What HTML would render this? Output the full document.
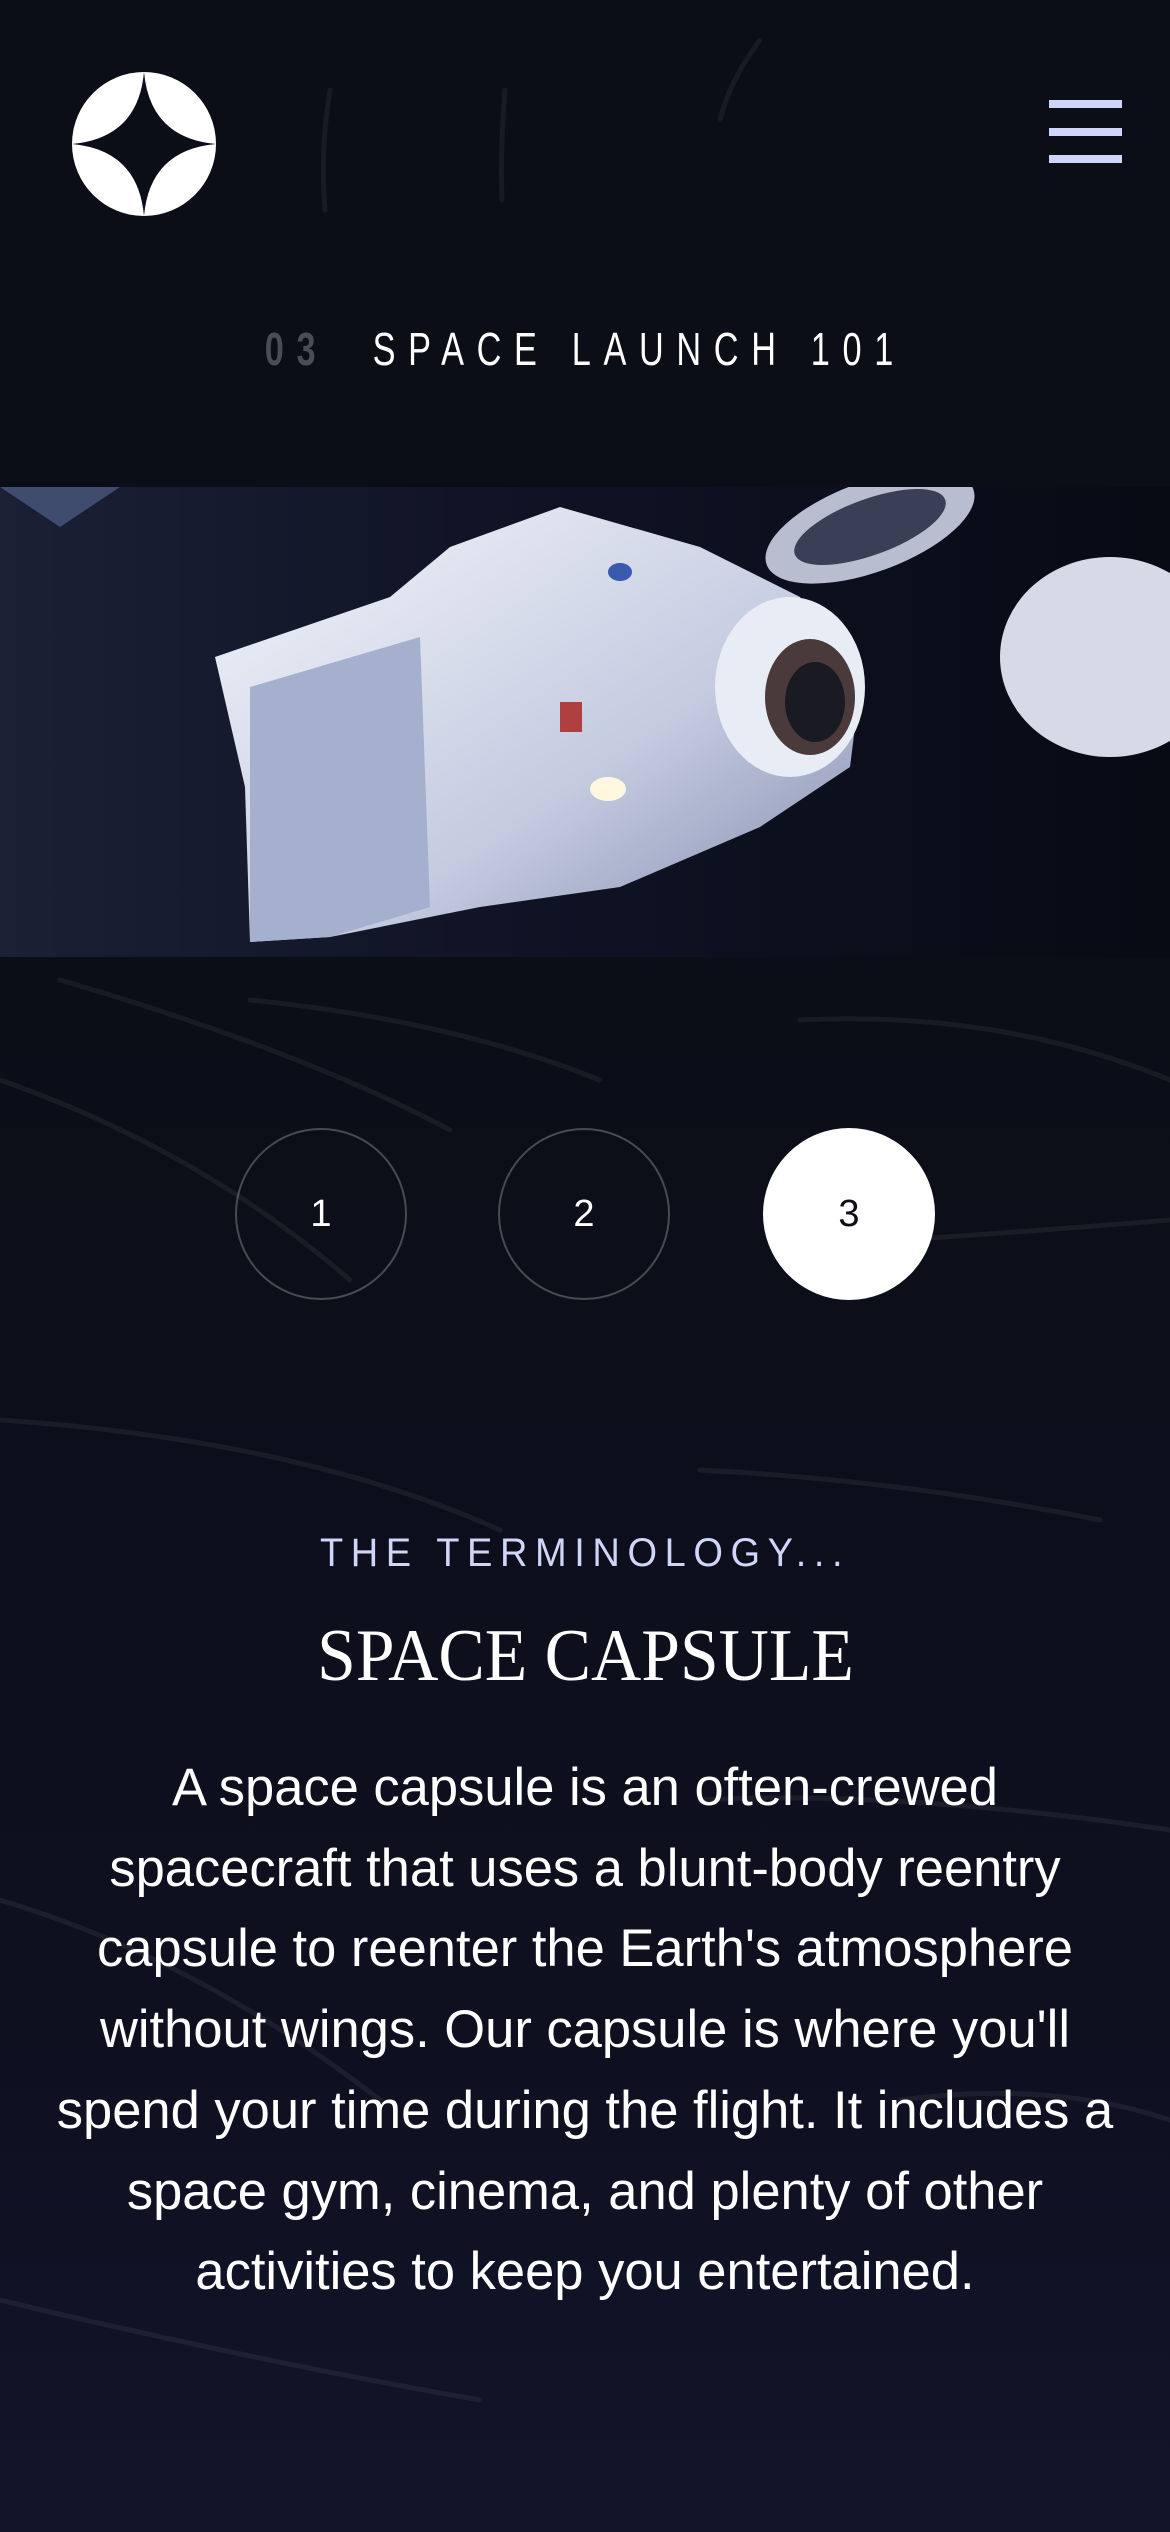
<!DOCTYPE html>
<html><head><meta charset="utf-8"><style>
*{margin:0;padding:0;box-sizing:border-box}
html,body{width:1170px;height:2532px;overflow:hidden}
body{position:relative;background:linear-gradient(180deg,#0b0d17 0%,#0b0d17 40%,#0e1020 80%,#13142a 100%);font-family:"Liberation Sans",sans-serif;color:#fff}
.abs{position:absolute}
.bar{position:absolute;left:1049px;width:73px;height:8px;background:#d0d6f9}
.title{left:0;width:1170px;top:322px;text-align:center;white-space:nowrap}
.title span{display:inline-block;font-size:46px;letter-spacing:17px;transform:scaleX(.745);transform-origin:center}
.circ{position:absolute;top:1128px;width:172px;height:172px;border-radius:50%;border:2px solid rgba(255,255,255,.25);display:flex;align-items:center;justify-content:center;font-size:38px;color:#fff}
.circ.on{background:#fff;color:#0b0d17;border-color:#fff}
.sub{left:0;width:1170px;top:1531px;text-align:center;color:#d0d6f9;font-size:40px;white-space:nowrap}
.sub span{display:inline-block;letter-spacing:8px;transform:scaleX(.95)}
.h{left:0;width:1170px;top:1614px;text-align:center;font-family:"Liberation Serif",serif;font-size:74px;white-space:nowrap}
.h span{display:inline-block;transform:scaleX(.94)}
.p{left:0;width:1170px;top:1748px;text-align:center;font-size:52.5px;line-height:80.7px;white-space:nowrap}
.p span{display:inline-block}
</style></head><body>
<svg class="abs" style="left:0;top:0" width="1170" height="2532">
<g stroke="#ffffff" stroke-opacity=".06" stroke-width="5" fill="none" stroke-linecap="round">
<path d="M330 90 Q320 150 325 210"/><path d="M505 90 Q500 150 502 200"/><path d="M760 40 Q730 80 720 120"/>
<path d="M0 1080 Q200 1150 350 1280"/><path d="M60 980 Q300 1050 450 1130"/><path d="M800 1020 Q1000 1010 1170 1080"/>
<path d="M900 1240 Q1050 1230 1170 1220"/><path d="M0 1420 Q300 1440 500 1530"/><path d="M700 1470 Q900 1480 1100 1520"/>
<path d="M0 1900 Q200 1960 380 2100"/><path d="M700 1800 Q900 1790 1170 1830"/><path d="M900 2100 Q1050 2080 1170 2120"/>
<path d="M0 2300 Q250 2360 480 2400"/><path d="M250 1000 Q450 1020 600 1080"/>
</g>
</svg>
<svg class="abs" style="left:72px;top:72px" width="144" height="144" viewBox="-72 -72 144 144">
<circle r="72" fill="#fff"/>
<path d="M0 -72 Q6 -6 72 0 Q6 6 0 72 Q-6 6 -72 0 Q-6 -6 0 -72Z" fill="#0b0d17"/>
</svg>
<div class="bar" style="top:100px"></div><div class="bar" style="top:128px"></div><div class="bar" style="top:155px"></div>
<div class="abs title"><span><b style="color:#4a4c57;font-weight:bold">03</b>&nbsp; SPACE LAUNCH 101</span></div>
<svg class="abs" style="left:0;top:487px" width="1170" height="470">
<defs><linearGradient id="bg" x1="0" x2="1"><stop offset="0" stop-color="#1b2035"/><stop offset=".4" stop-color="#101426"/><stop offset="1" stop-color="#080a14"/></linearGradient>
<linearGradient id="cap" x1="0" x2="1" y1="0" y2="1"><stop offset="0" stop-color="#f4f6fb"/><stop offset=".6" stop-color="#c4cbe0"/><stop offset="1" stop-color="#7f89ad"/></linearGradient></defs>
<rect width="1170" height="470" fill="url(#bg)"/>
<path d="M0 0 L120 0 L60 40 Z" fill="#5a6a96" opacity=".6"/>
<path d="M215 170 L390 110 L450 60 L560 20 L700 60 L800 110 L860 200 L850 280 L760 340 L620 400 L480 420 L330 450 L250 455 L245 300 Z" fill="url(#cap)"/>
<path d="M250 200 L420 150 L430 420 L330 450 L250 455 Z" fill="#a5b0cf"/>
<ellipse cx="790" cy="200" rx="75" ry="90" fill="#e8ecf5"/>
<ellipse cx="810" cy="210" rx="45" ry="58" fill="#4b3a3c"/>
<ellipse cx="815" cy="215" rx="30" ry="40" fill="#1a1a22"/>
<ellipse cx="870" cy="40" rx="110" ry="45" fill="#b8bed0" transform="rotate(-20 870 40)"/>
<ellipse cx="870" cy="40" rx="80" ry="28" fill="#3a3f55" transform="rotate(-20 870 40)"/>
<ellipse cx="1110" cy="170" rx="110" ry="100" fill="#d5dae6"/>
<ellipse cx="620" cy="85" rx="12" ry="9" fill="#3a5ab0"/>
<rect x="560" y="215" width="22" height="30" fill="#b04040"/>
<ellipse cx="608" cy="302" rx="18" ry="12" fill="#fff7e0"/>
</svg>
<div class="circ" style="left:235px">1</div>
<div class="circ" style="left:498px">2</div>
<div class="circ on" style="left:763px">3</div>
<div class="abs sub"><span>THE TERMINOLOGY...</span></div>
<div class="abs h"><span>SPACE CAPSULE</span></div>
<div class="abs p"><span>A space capsule is an often-crewed</span><br><span>spacecraft that uses a blunt-body reentry</span><br><span>capsule to reenter the Earth's atmosphere</span><br><span>without wings. Our capsule is where you'll</span><br><span>spend your time during the flight. It includes a</span><br><span>space gym, cinema, and plenty of other</span><br><span>activities to keep you entertained.</span></div>
</body></html>
